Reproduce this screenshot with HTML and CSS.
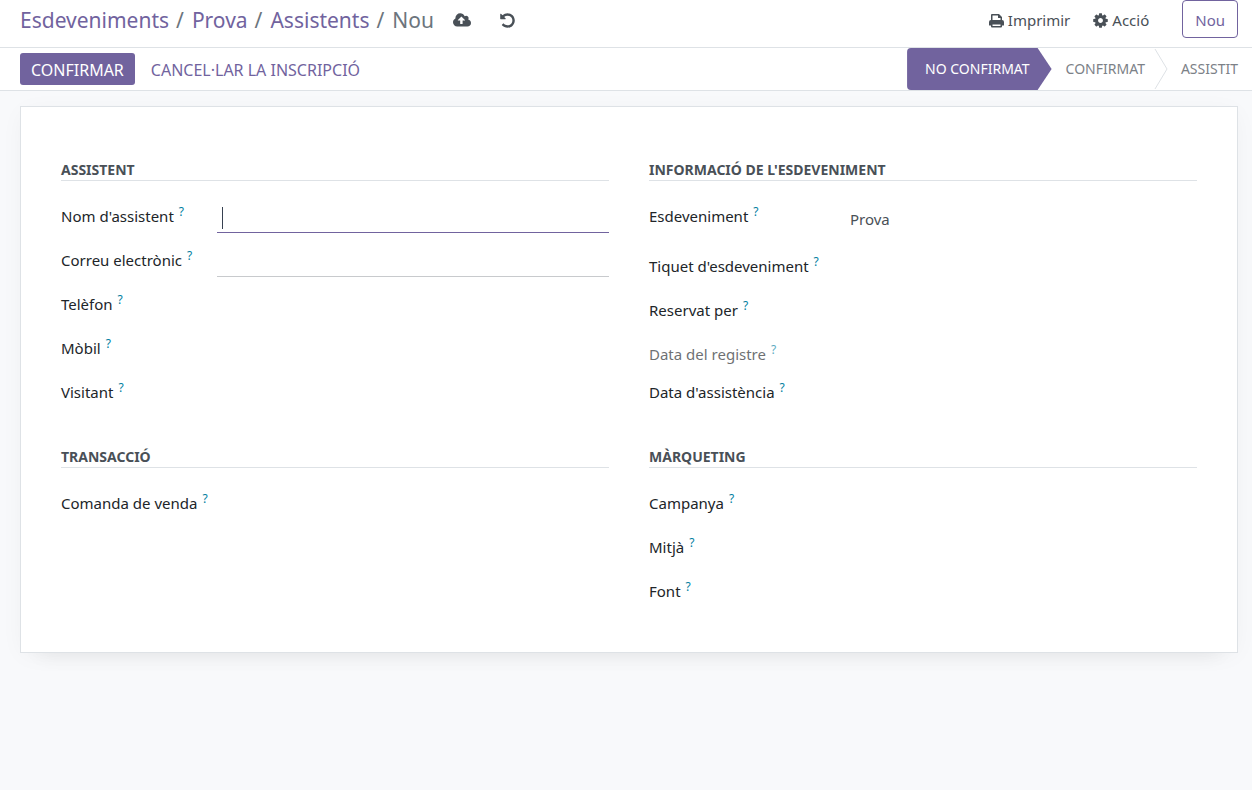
FILE: index.html
```html
<!DOCTYPE html>
<html lang="ca">
<head>
<meta charset="utf-8">
<meta name="viewport" content="width=device-width, initial-scale=1">
<title>Assistents - Nou</title>
<link rel="stylesheet" href="styles.css">
</head>
<body>
<header class="control-panel">
  <nav class="breadcrumb" aria-label="Ruta">
    <a href="#">Esdeveniments</a><span class="sep">/</span><a href="#">Prova</a><span class="sep">/</span><a href="#">Assistents</a><span class="sep">/</span><span class="current">Nou</span>
  </nav>
  <div class="record-actions">
    <button class="icon-btn" aria-label="Desa"><svg class="icon-wide" viewBox="0 0 1920 1792"><path d="M1280 864q0-14-9-23l-352-352q-9-9-23-9t-23 9l-351 351q-10 12-10 24 0 14 9 23t23 9h224v352q0 13 9.500 22.500t22.500 9.500h192q13 0 22.500-9.500t9.500-22.500v-352h224q13 0 22.500-9.500t9.500-22.500zm640 288q0 159-112.500 271.500t-271.500 112.500h-1088q-185 0-316.500-131.500t-131.500-316.500q0-130 70-240t188-165q-2-30-2-43 0-212 150-362t362-150q156 0 285.500 87t188.500 231q71-62 166-62 106 0 181 75t75 181q0 76-41 138 130 31 213.500 135.500t83.500 238.500z"/></svg></button>
    <button class="icon-btn" aria-label="Descarta"><svg class="icon" viewBox="0 0 1792 1792"><path d="M1664 896q0 156-61 298t-164 245-245 164-298 61q-172 0-327-72.500t-264-204.500q-7-10-6.500-22.500t8.500-20.500l137-138q10-9 25-9 16 2 23 12 73 95 179 147t225 52q104 0 198.500-40.500t163.500-109.500 109.500-163.500 40.500-198.500-40.500-198.500-109.500-163.500-163.500-109.500-198.500-40.500q-98 0-188 35.500t-160 101.500l137 138q31 30 14 69-17 40-59 40h-448q-26 0-45-19t-19-45v-448q0-42 40-59 39-17 69 14l130 129q107-101 244.500-156.500t284.500-55.500q156 0 298 61t245 164 164 245 61 298z"/></svg></button>
  </div>
  <div class="menus">
    <button class="menu-btn"><svg class="icon" viewBox="0 0 17 17"><path fill-rule="evenodd" d="M3 8V3Q3 2 4 2H11L14 5V8Q16 8 16 10V13Q16 13.500 15.500 13.500H14V14.500Q14 15.500 13 15.500H4Q3 15.500 3 14.500V13.500H1.500Q1 13.500 1 13V10Q1 8 3 8ZM4.500 3.500V8H12.500V6H10.500Q10 6 10 5.500V3.500ZM4.500 12.500V14H12.500V12.500Z"/></svg>Imprimir</button>
    <button class="menu-btn"><svg class="icon" viewBox="0 0 1792 1792"><path d="M1152 896q0-106-75-181t-181-75-181 75-75 181 75 181 181 75 181-75 75-181zm512-109v222q0 12-8 23t-20 13l-185 28q-19 54-39 91 35 50 107 138 10 12 10 25t-9 23q-27 37-99 108t-94 71q-12 0-26-9l-138-108q-44 23-91 38-16 136-29 186-7 28-36 28h-222q-14 0-24.500-8.500t-11.500-21.500l-28-184q-49-16-90-37l-141 107q-10 9-25 9-14 0-25-11-126-114-165-168-7-10-7-23 0-12 8-23 15-21 51-66.500t54-70.500q-27-50-41-99l-183-27q-13-2-21-12.500t-8-23.500v-222q0-12 8-23t19-13l186-28q14-46 39-92-40-57-107-138-10-12-10-24 0-10 9-23 26-36 98.500-107.500t94.500-71.500q13 0 26 10l138 107q44-23 91-38 16-136 29-186 7-28 36-28h222q14 0 24.500 8.500t11.500 21.500l28 184q49 16 90 37l142-107q9-9 24-9 13 0 25 10 129 119 165 170 7 8 7 22 0 12-8 23-15 21-51 66.500t-54 70.500q26 50 41 98l183 28q13 2 21 12.500t8 23.500z"/></svg>Acció</button>
  </div>
  <button class="new-btn">Nou</button>
</header>
<div class="statusbar">
  <button class="primary-btn">CONFIRMAR</button>
  <button class="link-btn">CANCEL·LAR LA INSCRIPCIÓ</button>
  <div class="stages">
    <button class="stage stage-active" aria-current="step">NO CONFIRMAT</button>
    <button class="stage">CONFIRMAT</button>
    <svg class="chevron" viewBox="0 0 14 42" aria-hidden="true"><path d="M1 1L13 21L1 41"/></svg>
    <button class="stage stage-last">ASSISTIT</button>
  </div>
</div>
<main class="sheet">
  <section class="group">
    <h2>ASSISTENT</h2>
    <div class="field"><label for="name">Nom d'assistent<sup>?</sup></label><div class="control"><input id="name" class="editing" type="text" autofocus><span class="caret"></span></div></div>
    <div class="field"><label for="email">Correu electrònic<sup>?</sup></label><div class="control"><input id="email" class="lined" type="email"></div></div>
    <div class="field"><label for="phone">Telèfon<sup>?</sup></label><div class="control"><input id="phone" type="tel"></div></div>
    <div class="field"><label for="mobile">Mòbil<sup>?</sup></label><div class="control"><input id="mobile" type="tel"></div></div>
    <div class="field"><label for="visitor">Visitant<sup>?</sup></label><div class="control"><input id="visitor" type="text"></div></div>
  </section>
  <section class="group group-wide">
    <h2>INFORMACIÓ DE L'ESDEVENIMENT</h2>
    <div class="field field-tall"><label for="event">Esdeveniment<sup>?</sup></label><div class="control"><input id="event" type="text" value="Prova"></div></div>
    <div class="field"><label for="ticket">Tiquet d'esdeveniment<sup>?</sup></label><div class="control"><input id="ticket" type="text"></div></div>
    <div class="field"><label for="booked">Reservat per<sup>?</sup></label><div class="control"><input id="booked" type="text"></div></div>
    <div class="field field-readonly"><label for="regdate">Data del registre<sup>?</sup></label><div class="control"><input id="regdate" type="text" readonly></div></div>
    <div class="field"><label for="attdate">Data d'assistència<sup>?</sup></label><div class="control"><input id="attdate" type="text"></div></div>
  </section>
  <section class="group">
    <h2>TRANSACCIÓ</h2>
    <div class="field"><label for="order">Comanda de venda<sup>?</sup></label><div class="control"><input id="order" type="text"></div></div>
  </section>
  <section class="group group-wide">
    <h2>MÀRQUETING</h2>
    <div class="field"><label for="campaign">Campanya<sup>?</sup></label><div class="control"><input id="campaign" type="text"></div></div>
    <div class="field"><label for="medium">Mitjà<sup>?</sup></label><div class="control"><input id="medium" type="text"></div></div>
    <div class="field"><label for="source">Font<sup>?</sup></label><div class="control"><input id="source" type="text"></div></div>
  </section>
</main>
</body>
</html>
```

FILE: styles.css
```css
* { box-sizing: border-box; }
body {
  margin: 0;
  background: #f8f9fb;
  color: #212529;
  font: 15px/22px "Segoe UI", "Noto Sans", sans-serif;
  font-feature-settings: "locl" 0;
}
button, input { font: inherit; color: inherit; font-feature-settings: inherit; }
button { border: 0; background: none; padding: 0; cursor: pointer; white-space: nowrap; }
a { color: #71639e; text-decoration: none; }
svg { fill: currentColor; flex: none; }

.control-panel {
  display: flex;
  align-items: center;
  min-height: 48px;
  padding: 0 14px 9px 20px;
  background: #fff;
  border-bottom: 1px solid #dee2e6;
  color: #495057;
}
.breadcrumb { font-size: 21px; line-height: 32px; padding-top: 2px; white-space: nowrap; }
.sep { padding: 0 8px 0 7px; color: #6c757d; }
.current { color: #6c757d; }
.record-actions { display: flex; gap: 28px; margin-left: 19px; padding-top: 2px; }
.icon-btn { display: flex; }
.icon { width: 17px; height: 17px; }
.icon-wide { width: 18px; height: 17px; }
.menus { display: flex; gap: 22px; margin-left: auto; padding-top: 2px; }
.menu-btn { display: flex; align-items: center; gap: 3px; }
.new-btn {
  height: 38px;
  margin-left: 33px;
  padding: 2px 12px 0;
  border: 1px solid #71639e;
  border-radius: 4px;
  color: #71639e;
}

.statusbar {
  display: flex;
  align-items: center;
  min-height: 43px;
  padding: 0 14px 0 20px;
  background: #fff;
  border-bottom: 1px solid #dee2e6;
  font-size: 16px;
}
.primary-btn {
  height: 32px;
  padding: 2px 11px 0;
  background: #71639e;
  color: #fff;
  border-radius: 3px;
}
.link-btn { margin-left: 16px; padding-top: 2px; color: #71639e; }
.stages { display: flex; align-self: stretch; margin-left: auto; font-size: 14px; color: #7c8187; }
.stage { padding: 0 9px 0 14px; }
.stage-active {
  padding: 0 22px 0 18px;
  background: #71639e;
  color: #fff;
  border-radius: 4px 0 0 4px;
  clip-path: polygon(0 0, calc(100% - 14px) 0, 100% 50%, calc(100% - 14px) 100%, 0 100%);
}
.stage-last { padding: 0 0 0 13px; }
.chevron { width: 14px; height: 42px; fill: none; stroke: #dee2e6; }

.sheet {
  display: grid;
  grid-template-columns: 1fr 1fr;
  gap: 36px 40px;
  margin: 15px 14px 40px 20px;
  padding: 51px 40px 44px;
  background: #fff;
  border: 1px solid #dee2e6;
  box-shadow: 0 20px 20px -20px rgba(0, 0, 0, 0.07), 0 4px 24px -4px rgba(0, 0, 0, 0.05);
}
.group h2 {
  margin: 0 0 8px;
  padding-top: 2px;
  border-bottom: 1px solid #dee2e6;
  font-size: 14px;
  line-height: 20px;
  font-weight: 700;
  color: #495057;
}
.field {
  display: grid;
  grid-template-columns: 156px 1fr;
  height: 44px;
  padding-top: 12px;
}
.group-wide .field { grid-template-columns: 196px 1fr; }
.field label { padding-top: 4px; white-space: nowrap; }
.group-wide .field-tall { height: 50px; }
.field-tall .control { padding-top: 2px; }
.group-wide .field-readonly { height: 38px; }
.field-readonly label { opacity: 0.65; }
.field-readonly input { height: 26px; }
sup { margin-left: 5px; font-size: 12px; line-height: 0; vertical-align: 6px; color: #017e9f; }
.control { position: relative; }
.control input {
  display: block;
  width: 100%;
  height: 32px;
  padding: 0 5px;
  border: 0;
  border-bottom: 1px solid transparent;
  outline: 0;
  background: transparent;
  color: #495057;
}
.control .lined { border-color: #c8cacd; }
.control .editing { border-color: #71639e; caret-color: transparent; }
.caret { position: absolute; left: 5px; top: 6px; width: 1px; height: 22px; background: #374151; }
```
